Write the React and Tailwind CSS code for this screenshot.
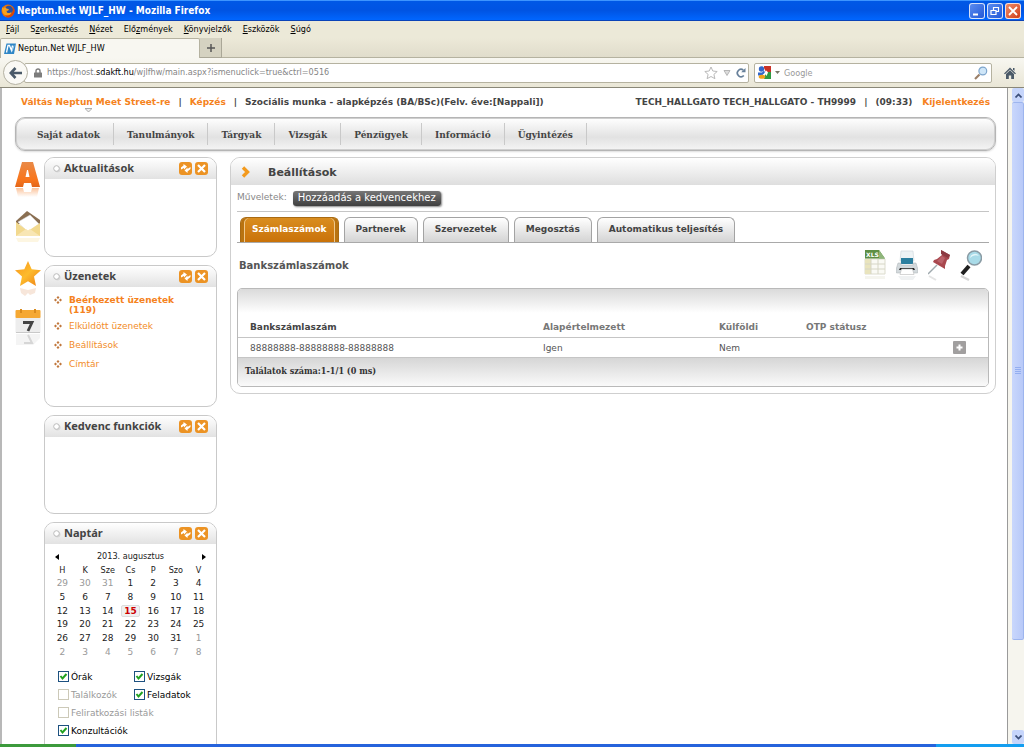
import { Fragment } from 'react';
import clsx from 'clsx';

const browserMenu = ['Fájl', 'Szerkesztés', 'Nézet', 'Előzmények', 'Könyvjelzők', 'Eszközök', 'Súgó'];
// index of the underlined access key in each menu entry
const accessKeys = [0, 1, 0, 3, 0, 0, 0];

const siteMenu = ['Saját adatok', 'Tanulmányok', 'Tárgyak', 'Vizsgák', 'Pénzügyek', 'Információ', 'Ügyintézés'];

const tabs = ['Számlaszámok', 'Partnerek', 'Szervezetek', 'Megosztás', 'Automatikus teljesítés'];

const messages = [
  { label: 'Beérkezett üzenetek (119)', bold: true },
  { label: 'Elküldött üzenetek' },
  { label: 'Beállítások' },
  { label: 'Címtár' },
];

const weekDays = ['H', 'K', 'Sze', 'Cs', 'P', 'Szo', 'V'];

const weeks = [
  [29, 30, 31, 1, 2, 3, 4],
  [5, 6, 7, 8, 9, 10, 11],
  [12, 13, 14, 15, 16, 17, 18],
  [19, 20, 21, 22, 23, 24, 25],
  [26, 27, 28, 29, 30, 31, 1],
  [2, 3, 4, 5, 6, 7, 8],
];

const isOtherMonth = (week, day) => (week === 0 && day > 7) || (week > 3 && day < 9);

/* ---------- Browser icons ---------- */

const FirefoxIcon = () => (
  <svg className="w-[14px] h-[14px]" viewBox="0 0 14 14">
    <circle cx="7" cy="7" r="6.5" fill="#e8710a" />
    <circle cx="7.8" cy="6" r="4.2" fill="#2b4f9e" />
    <path d="M1 3l1.500 1.500L4 3l1.500 1.500 2.500.8-1 1.500H5.500L6 8.500c1.500 1 3.500.5 4.500-.8-.3 3-2.500 4.300-5 3.800C2.500 11 .8 8.500 1 3z" fill="#f7a11b" />
    <path d="M7 13.500c4 0 6.500-3 6.500-6.500 0-2-.7-3.500-2-4.500.8 2 .8 4.500-.6 6.500C9.500 11 7 11.800 4 11.500c1 1.300 2 2 3 2z" fill="#d6450b" />
  </svg>
);

const NeptunIcon = () => (
  <svg className="w-[12px] h-[12px]" viewBox="0 0 12 12">
    <path d="M2.500.5H12L10 11H0z" fill="#2f86c6" />
    <path d="M2.500 9.500L4 2.500h1.500l2 5 1-5" fill="none" stroke="#fff" strokeWidth="1.300" />
    <path d="M8 8.500l2-6" stroke="#a7d0ee" />
  </svg>
);

const LockIcon = () => (
  <svg className="w-[8px] h-[10px]" viewBox="0 0 8 10">
    <path d="M2 5V3a2 2 0 0 1 4 0v2" fill="none" stroke="#7d7d7d" strokeWidth="1.400" />
    <rect y="4.500" width="8" height="5" rx=".5" fill="#7d7d7d" />
  </svg>
);

const BackIcon = () => (
  <svg className="w-[14px] h-[12px]" viewBox="0 0 14 12">
    <path d="M6.500 1L1.800 6l4.700 5M2 6h11" fill="none" stroke="#4a5968" strokeWidth="2.600" />
  </svg>
);

const StarOutline = () => (
  <svg className="w-[14px] h-[14px]" viewBox="0 0 14 14">
    <path d="M7 1l1.800 4 4.400.5-3.300 2.900 1 4.300L7 10.500l-3.900 2.200 1-4.300L.8 5.500 5.200 5z" fill="#fff" stroke="#b9b9b9" />
  </svg>
);

const ReloadIcon = () => (
  <svg className="w-[10px] h-[10px]" viewBox="0 0 10 10">
    <path d="M7.800 7.500A3.700 3.700 0 1 1 7.300 2" fill="none" stroke="#67809a" strokeWidth="1.700" />
    <path d="M9.500 0v4.300H5.200z" fill="#67809a" />
  </svg>
);

const GoogleIcon = () => (
  <svg className="w-[13px] h-[13px]" viewBox="0 0 13 13">
    <path d="M5 0h8v6H8z" fill="#c93226" />
    <path d="M8 6h5v7H6z" fill="#2f9a41" />
    <path d="M0 0h6v6L3 8 0 6z" fill="#fff" />
    <ellipse cx="3.500" cy="3" rx="2.700" ry="2.700" fill="#3367c9" />
    <path d="M0 6.500h4l2-2 1 2-3 3H0z" fill="#3367c9" />
    <ellipse cx="4" cy="10.800" rx="3.300" ry="2" fill="#f0a21b" />
    <path d="M8.500 4.500l1.500 2-1.500 3.500-2-3z" fill="#fff" />
  </svg>
);

const SearchIcon = () => (
  <svg className="w-[14px] h-[14px]" viewBox="0 0 14 14">
    <path d="M5.500 8.500L1 13" stroke="#9a7f68" strokeWidth="2.200" />
    <circle cx="8.800" cy="5" r="3.900" fill="#cfe6f8" stroke="#7fa6cc" strokeWidth="1.200" />
  </svg>
);

const HomeIcon = () => (
  <svg className="w-[12px] h-[12px]" viewBox="0 0 12 12">
    <path d="M0 6.500L6 .5l6 6-1 .8L6 2.500l-5 4.800z" fill="#4b5a69" />
    <path d="M2 7l4-3.800L10 7v5H7.200V8.500H4.800V12H2z" fill="#4b5a69" />
    <path d="M9 1h1.500v3L9 2.500z" fill="#4b5a69" />
  </svg>
);

const WindowButton = ({ label, close, children }) => (
  <button
    aria-label={label}
    className={clsx(
      'w-4 h-4 rounded-[3px] border border-white/80 flex items-center justify-center bg-gradient-to-br',
      close ? 'from-[#ee8a66] to-[#cf3a12]' : 'from-[#5b8cf0] to-[#2357d6]'
    )}
  >
    <svg className="w-[14px] h-[14px]" viewBox="0 0 14 14" fill="none" stroke="#fff">
      {children}
    </svg>
  </button>
);

/* ---------- Side icons ---------- */

const LetterAIcon = () => (
  <svg className="w-[26px] h-[40px]" viewBox="0 0 26 40">
    <defs>
      <linearGradient id="aFill" x1="0" y1="0" x2="0" y2="1">
        <stop offset="0" stopColor="#e98a48" />
        <stop offset=".7" stopColor="#f9761c" />
        <stop offset="1" stopColor="#e2661a" />
      </linearGradient>
      <linearGradient id="aGlow" x1="0" y1="0" x2="0" y2="1">
        <stop offset="0" stopColor="#fbc39b" />
        <stop offset="1" stopColor="#fff" />
      </linearGradient>
    </defs>
    <path d="M7 1h11l7 25h-8l-1-4H9l-1 4H0zM10.500 16h4l-1.500-7h-1z" fill="url(#aFill)" fillRule="evenodd" />
    <path d="M1 27h7l1 4h7l1-4h7l-2 9H3z" fill="url(#aGlow)" />
  </svg>
);

const EnvelopeIcon = () => (
  <svg className="w-[26px] h-[34px]" viewBox="0 0 26 34">
    <path d="M1 10L12 0l13 9v4H1z" fill="#8a6f52" />
    <path d="M3 11L15 4l9 9-11 8z" fill="#fff" stroke="#ddd" strokeWidth=".5" />
    <path d="M1 11l12 9 12-8v13H1z" fill="#f2d98f" />
    <path d="M1 25l10-7 2 1.500 2-1.500 10 7z" fill="#f8e6b4" />
    <path d="M1 27h24l-2 4H3z" fill="#fdf6e2" />
  </svg>
);

const StarIcon = () => (
  <svg className="w-[26px] h-[38px]" viewBox="0 0 26 38">
    <defs>
      <linearGradient id="starFill" x1="0" y1="0" x2="1" y2="1">
        <stop offset="0" stopColor="#f7931e" />
        <stop offset=".5" stopColor="#fdbb2c" />
        <stop offset="1" stopColor="#ee7f14" />
      </linearGradient>
    </defs>
    <path d="M13 0l3.700 8.300 9.300 1-7 6.200 2 9.500-8-4.800L5 25l2-9.500L0 9.300l9.300-1z" fill="url(#starFill)" />
    <path d="M5 27l8 2 8-2-1 5-5 2-2-2-3 3-4-3z" fill="#f7e6da" />
  </svg>
);

const CalendarIcon = () => (
  <svg className="w-[26px] h-[38px]" viewBox="0 0 26 38">
    <rect x=".5" y="7" width="25" height="17" rx="1" fill="#ededed" />
    <path d="M1 23.500h24" stroke="#c9c9c9" />
    <rect x=".5" y="1" width="25" height="8" rx="1" fill="#f5a833" />
    <path d="M6 0v4M20 0v4" stroke="#d98a1c" strokeWidth="2" />
    <path d="M8 13.500h9l-4 8.500" fill="none" stroke="#444" strokeWidth="2.800" />
    <path d="M1 25h24v4l-7 7H1z" fill="#f4f4f4" />
    <path d="M13 26l4 8H9" fill="none" stroke="#d6d6d6" strokeWidth="2" />
  </svg>
);

/* ---------- Toolbar icons ---------- */

const XlsIcon = () => (
  <svg className="w-[22px] h-[32px]" viewBox="0 0 22 32">
    <path d="M1 9h20v15H1z" fill="#fafaf5" stroke="#dcdccd" />
    <path d="M1 9h6v15H1z" fill="#e9e4bd" />
    <path d="M1 14h20M1 19h20M7 9v15M14 9v15" stroke="#d6d6c6" />
    <path d="M1 0h14l6 8.500H1z" fill="#5e8f45" />
    <path d="M15 0l6 8.500h-6z" fill="#8fb57b" />
    <text x="2" y="7" fontSize="6" fontWeight="bold" fill="#fff" fontFamily="DejaVu Sans, sans-serif">XLS</text>
    <path d="M1 26h20v3H1z" fill="#f5f5ef" />
  </svg>
);

const PrinterIcon = () => (
  <svg className="w-[22px] h-[32px]" viewBox="0 0 22 32">
    <path d="M5 1h12l1 10H4z" fill="#eef3f5" stroke="#cdd5d8" strokeWidth=".6" />
    <path d="M5 8h12v6H5z" fill="#2c7f9f" />
    <path d="M2 13h3v2h12v-2h3l1.500 5v5h-21v-5z" fill="#d3d9dc" stroke="#a9b0b4" strokeWidth=".5" />
    <path d="M4 18h14l1 2H3z" fill="#222" />
    <path d="M5.500 19h11l1.500 5.500H4z" fill="#fff" stroke="#bbb" strokeWidth=".6" />
    <path d="M2 26h18l-3 4H5z" fill="#eff1f2" />
  </svg>
);

const PinIcon = () => (
  <svg className="w-[22px] h-[32px]" viewBox="0 0 22 32">
    <path d="M9 15L0 24" stroke="#9fa9ae" strokeWidth="1.500" />
    <path d="M13 0l9 5-1 4-2 1-2 6v3L5 12l1-2 3-1 5-4z" fill="#a9484f" />
    <path d="M13 0l9 5-2 3-7-4z" fill="#8c3a42" />
    <path d="M14 6l3 2-3 6-5-3z" fill="#bb626a" />
    <path d="M1 26l7 4" stroke="#e4e4e4" strokeWidth="2" />
  </svg>
);

const MagnifierIcon = () => (
  <svg className="w-[22px] h-[32px]" viewBox="0 0 22 32">
    <path d="M9 16l-7 8" stroke="#1f1f1f" strokeWidth="4" />
    <circle cx="14.500" cy="8" r="7" fill="#a9dbe8" stroke="#8a9ba4" strokeWidth="1.500" />
    <path d="M10 8a5 5 0 0 1 9-2 8 8 0 0 0-9 2z" fill="#e4f6fa" />
    <path d="M1 26l8 4" stroke="#d5d5d5" strokeWidth="2.500" />
  </svg>
);

const RefreshButton = () => (
  <button aria-label="Frissítés" className="w-[13px] h-[13px] rounded-[3px] bg-[#ec9324]">
    <svg className="w-[13px] h-[13px]" viewBox="0 0 13 13">
      <path d="M2 7.500V5.500L4.500 3.500V2L8 4.500 5 7.500V6z" fill="#fff" />
      <path d="M11.500 5v2L8.500 9.500V11L5.500 8.500l3-3V7z" fill="#fff" />
    </svg>
  </button>
);

const CloseButton = () => (
  <button aria-label="Bezárás" className="w-[13px] h-[13px] rounded-[3px] bg-[#ec9324]">
    <svg className="w-[13px] h-[13px]" viewBox="0 0 13 13">
      <path d="M3 3l7 7M10 3l-7 7" stroke="#fff" strokeWidth="2.200" />
    </svg>
  </button>
);

/* ---------- Sections ---------- */

const BrowserHeader = () => (
  <header className="shrink-0 font-['DejaVu_Sans_Condensed','DejaVu_Sans',sans-serif] text-[9px]">
    {/* Title bar */}
    <div className="h-[21px] flex items-center gap-[2px] pl-px pr-[3px] border-t border-[#3d95ff] border-b border-b-[#0a43b8] bg-gradient-to-b from-[#0058e6] via-[#0054e3] to-[#0066ff]">
      <FirefoxIcon />
      <h1 className="flex-1 text-[10px] font-bold text-white">Neptun.Net WJLF_HW - Mozilla Firefox</h1>
      <div className="flex gap-[2px]">
        <WindowButton label="Kis méret">
          <path d="M3 10.500h5" strokeWidth="2" />
        </WindowButton>
        <WindowButton label="Előző méret">
          <path d="M3 6.500h5v4H3zM5.500 6V3.500h5v4H8.500" strokeWidth="1.200" />
        </WindowButton>
        <WindowButton label="Bezárás" close>
          <path d="M3 3l8 8M11 3l-8 8" strokeWidth="1.800" />
        </WindowButton>
      </div>
    </div>

    {/* Menu bar */}
    <nav className="h-[17px] flex items-center gap-[11px] pl-[6px] bg-[#ece9d8] text-black">
      {browserMenu.map((item, i) => (
        <button key={item}>
          {item.slice(0, accessKeys[i])}
          <u>{item[accessKeys[i]]}</u>
          {item.slice(accessKeys[i] + 1)}
        </button>
      ))}
    </nav>

    {/* Tab strip */}
    <div className="h-[20px] flex bg-gradient-to-b from-[#ece9d8] to-[#e0dccb]">
      <div className="w-[200px] flex items-center gap-[2px] pl-[3px] border border-b-0 border-[#b5b2a0] rounded-t-[2px] bg-[#f8f7f1] text-black">
        <NeptunIcon />
        Neptun.Net WJLF_HW
      </div>
      <button aria-label="Új lap" className="w-[22px] flex items-center justify-center border-r border-b border-[#aaa797] bg-[#d5d2c1]">
        <svg className="w-2 h-2" viewBox="0 0 8 8">
          <path d="M4 0v8M0 4h8" stroke="#555" strokeWidth="1.500" />
        </svg>
      </button>
      <div className="flex-1 border-b border-[#b5b2a0]" />
    </div>

    {/* Navigation bar */}
    <div className="h-[30px] flex items-center pl-[3px] pr-2 bg-gradient-to-b from-[#f8f7f1] to-[#e9e6d6] border-b border-[#8a8778]">
      <button aria-label="Vissza" className="z-10 w-[25px] h-[25px] rounded-full border border-[#b4b1a2] bg-[#faf9f5] flex items-center justify-center">
        <BackIcon />
      </button>
      <div className="flex-1 -ml-1 h-5 flex items-center gap-[5px] pl-[9px] pr-[2px] border border-[#b5b2a0] bg-white rounded-[2px] text-[#858585]">
        <LockIcon />
        <p className="flex-1">
          https://host.<span className="text-black">sdakft.hu</span>/wjlfhw/main.aspx?ismenuclick=true&amp;ctrl=0516
        </p>
        <StarOutline />
        <svg className="w-2 h-[6px]" viewBox="0 0 8 6">
          <path d="M1 .5h6l-3 5z" fill="#ddd" stroke="#b5b5b5" />
        </svg>
        <button aria-label="Újratöltés">
          <ReloadIcon />
        </button>
      </div>
      <div className="ml-[5px] w-[238px] h-5 flex items-center gap-[4px] px-[3px] border border-[#b5b2a0] bg-white rounded-[2px]">
        <GoogleIcon />
        <svg className="w-[5px] h-[3px]" viewBox="0 0 5 3">
          <path d="M0 0h5L2.500 3z" fill="#776" />
        </svg>
        <input aria-label="Keresés" placeholder="Google" className="flex-1 min-w-0 h-4 outline-none placeholder:text-[#999]" />
        <button aria-label="Keresés indítása">
          <SearchIcon />
        </button>
      </div>
      <button aria-label="Kezdőlap" className="ml-3">
        <HomeIcon />
      </button>
    </div>
  </header>
);

const Scrollbar = () => (
  <div className="w-4 shrink-0 flex flex-col pl-1 bg-[#f6f5ee]">
    <div className="h-[14px] rounded-[2px] bg-[#c6d5fb] flex items-center justify-center">
      <svg className="w-[7px] h-[5px]" viewBox="0 0 7 5">
        <path d="M.5 4.500l3-3 3 3" fill="none" stroke="#3c4f7a" strokeWidth="1.700" />
      </svg>
    </div>
    <div className="h-[82%] rounded-[2px] border-r border-y border-[#9db5ee] bg-gradient-to-r from-[#c9d7fc] to-[#b8c9f8] flex items-center justify-center">
      <svg className="w-[6px] h-[8px]" viewBox="0 0 6 8">
        <path d="M0 .5h6M0 2.500h6M0 4.500h6M0 6.500h6" stroke="#93aef0" />
      </svg>
    </div>
    <div className="flex-1" />
    <div className="h-[14px] rounded-[2px] bg-[#c6d5fb] flex items-center justify-center">
      <svg className="w-[7px] h-[5px]" viewBox="0 0 7 5">
        <path d="M.5.5l3 3 3-3" fill="none" stroke="#3c4f7a" strokeWidth="1.700" />
      </svg>
    </div>
  </div>
);

const SidePanel = ({ title, className, children }) => (
  <section className={clsx('w-[173px] rounded-[10px] border border-[#c9c9c9] bg-white overflow-hidden', className)}>
    <div className="h-[21px] flex items-center gap-[3px] pl-2 pr-2 bg-gradient-to-b from-white to-[#e2e2e2]">
      <svg className="w-2 h-2" viewBox="0 0 8 8">
        <circle cx="4.500" cy="4.500" r="3" fill="#d9d9d9" />
        <circle cx="3.500" cy="3.500" r="2.800" fill="#fff" stroke="#bbb" />
      </svg>
      <h2 className="flex-1 font-['Noto_Sans',sans-serif] text-[11px] font-bold text-[#444]">{title}</h2>
      <RefreshButton />
      <CloseButton />
    </div>
    {children}
  </section>
);

const Check = ({ label, checked, disabled }) => (
  <label className={clsx('h-[18px] flex items-center gap-[2px] text-[9px] whitespace-nowrap', disabled ? 'text-[#999]' : 'text-black')}>
    <span className="grid w-[11px] h-[11px]">
      <input
        type="checkbox"
        defaultChecked={checked}
        disabled={disabled}
        className={clsx(
          'peer appearance-none col-start-1 row-start-1 w-[11px] h-[11px] border bg-white',
          disabled ? 'border-[#ccc9b8]' : 'border-[#1d5180]'
        )}
      />
      <svg className="hidden peer-checked:block col-start-1 row-start-1 w-[11px] h-[11px] pointer-events-none" viewBox="0 0 11 11">
        <path d="M2.500 5l2 2.500 4-4.500" fill="none" stroke="#21a121" strokeWidth="2" />
      </svg>
    </span>
    <span className="pt-1">{label}</span>
  </label>
);

const Calendar = () => (
  <div className="px-[6px] pt-[6px] text-[#222]">
    <div className="h-[14px] flex items-center justify-between px-1 font-['DejaVu_Sans_Condensed','DejaVu_Sans',sans-serif] text-[9px]">
      <button aria-label="Előző hónap">
        <svg className="w-1 h-[6px]" viewBox="0 0 4 6">
          <path d="M4 0v6L0 3z" />
        </svg>
      </button>
      2013. augusztus
      <button aria-label="Következő hónap">
        <svg className="w-1 h-[6px]" viewBox="0 0 4 6">
          <path d="M0 0v6l4-3z" />
        </svg>
      </button>
    </div>
    <table className="w-full h-[95px] table-fixed text-center text-[9px] leading-[12px]">
      <thead>
        <tr className="font-['DejaVu_Sans_Condensed','DejaVu_Sans',sans-serif]">
          {weekDays.map((day) => (
            <th key={day} className="p-0 font-normal">{day}</th>
          ))}
        </tr>
      </thead>
      <tbody>
        {weeks.map((week, w) => (
          <tr key={w}>
            {week.map((day) => (
              <td
                key={day}
                className={clsx('p-0', isOtherMonth(w, day) && 'text-[#999]')}
              >
                {w === 2 && day === 15 ? (
                  <span className="block h-3 mx-[2px] rounded-[2px] border border-[#ddd] bg-[#f0f0f0] font-bold leading-[11px] text-[#c00]">15</span>
                ) : (
                  day
                )}
              </td>
            ))}
          </tr>
        ))}
      </tbody>
    </table>
    <div className="mt-[8px] pl-[7px] grid grid-cols-[76px_1fr]">
      <Check label="Órák" checked />
      <Check label="Vizsgák" checked />
      <Check label="Találkozók" disabled />
      <Check label="Feladatok" checked />
      <div className="col-span-2">
        <Check label="Feliratkozási listák" disabled />
        <Check label="Konzultációk" checked />
      </div>
    </div>
  </div>
);

const Sidebar = () => (
  <aside className="flex gap-[3px]">
    <nav className="w-[26px] flex flex-col items-center gap-[10px] pt-1">
      <a href="#aktualitasok" aria-label="Aktualitások"><LetterAIcon /></a>
      <a href="#uzenetek" aria-label="Üzenetek"><EnvelopeIcon /></a>
      <a href="#kedvencek" aria-label="Kedvenc funkciók" className="pt-[6px]"><StarIcon /></a>
      <a href="#naptar" aria-label="Naptár"><CalendarIcon /></a>
    </nav>
    <div className="flex flex-col gap-2">
      <SidePanel title="Aktualitások" className="h-[100px]" />
      <SidePanel title="Üzenetek" className="h-[142px]">
        <ul className="pl-[9px] pr-6 pt-2 text-[9px] leading-[10px]">
          {messages.map(({ label, bold }) => (
            <li key={label} className="flex items-start gap-[7px] mb-[9px] first:mb-[6px]">
              <svg className="w-2 h-2 mt-px shrink-0" viewBox="0 0 8 8">
                <path d="M4 0l1.500 1.500L4 3 2.500 1.500zM4 5l1.500 1.500L4 8 2.500 6.500zM1.500 2.500L3 4 1.500 5.500 0 4zM6.500 2.500L8 4 6.500 5.500 5 4z" fill="#c0763a" />
              </svg>
              <a href="#uzenetek" className={bold ? 'font-bold text-[#f58220]' : 'text-[#f28c28]'}>{label}</a>
            </li>
          ))}
        </ul>
      </SidePanel>
      <SidePanel title="Kedvenc funkciók" className="h-[99px]" />
      <SidePanel title="Naptár" className="h-[260px]">
        <Calendar />
      </SidePanel>
    </div>
  </aside>
);

const AccountsTable = () => (
  <div className="rounded-[5px] border border-[#b9b9b9] overflow-hidden">
    <table className="w-full table-fixed text-left text-[9px] text-[#555]">
      <thead>
        <tr className="h-12 align-bottom bg-gradient-to-b from-[#dadada] via-white to-white text-[#777]">
          <th className="w-[305px] p-0 pl-3 pb-1 leading-[12px] text-[#444]">Bankszámlaszám</th>
          <th className="w-[176px] p-0 pb-1 leading-[12px]">Alapértelmezett</th>
          <th className="w-[87px] p-0 pb-1 leading-[12px]">Külföldi</th>
          <th className="p-0 pb-1 leading-[12px]">OTP státusz</th>
          <th className="w-[35px] p-0" />
        </tr>
      </thead>
      <tbody>
        <tr className="h-5 border-y border-[#c5c5c5] leading-[12px]">
          <td className="p-0 pl-3 pt-[2px]">88888888-88888888-88888888</td>
          <td className="p-0 pt-[2px]">Igen</td>
          <td className="p-0 pt-[2px]">Nem</td>
          <td className="p-0" />
          <td className="p-0">
            <button aria-label="Lehetőségek" className="block w-[13px] h-[13px] rounded-[1px] bg-[#a19f9f]">
              <svg className="w-[13px] h-[13px]" viewBox="0 0 13 13">
                <path d="M6.500 3.500v6M3.500 6.500h6" stroke="#fff" strokeWidth="2" />
              </svg>
            </button>
          </td>
        </tr>
      </tbody>
    </table>
    <div className="h-[28px] flex items-center pl-[7px] bg-gradient-to-b from-[#d6d6d6] to-[#fafafa] font-['DejaVu_Serif_Condensed','DejaVu_Serif',serif] text-[9px] font-bold text-[#333]">
      Találatok száma:1-1/1 (0 ms)
    </div>
  </div>
);

const MainPanel = () => (
  <main className="flex-1 self-start rounded-[10px] border border-[#cfcfcf] bg-white overflow-hidden">
    <div className="h-[27px] flex items-center pl-[10px] bg-gradient-to-b from-white to-[#dedede]">
      <svg className="w-[10px] h-[12px]" viewBox="0 0 10 12">
        <path d="M2 1.500L6.500 6 2 10.500" fill="none" stroke="#f39a1d" strokeWidth="3.400" />
      </svg>
      <h2 className="ml-[17px] pt-1 text-[11px] font-bold text-[#444]">Beállítások</h2>
    </div>

    <div className="px-[6px] pb-[6px]">
      <div className="h-[27px] flex items-center gap-[6px] border-b border-[#c5c5c5]">
        <span className="text-[9px] text-[#888]">Műveletek:</span>
        <button className="h-[15px] px-[5px] rounded-[3px] bg-gradient-to-b from-[#777] to-[#3f3f3f] shadow-[1px_1px_2px_#888] text-[10px] leading-[14px] text-white">
          Hozzáadás a kedvencekhez
        </button>
      </div>

      <div role="tablist" className="flex gap-[5px] pl-[3px] mt-[5px] border-b border-[#a9a9a9]">
        {tabs.map((tab, i) => (
          <button
            key={tab}
            role="tab"
            aria-selected={i === 0}
            className={clsx(
              'h-[25px] px-[11px] rounded-t-[6px] border border-b-0 text-[9px] font-bold bg-gradient-to-b',
              i === 0
                ? 'border-[#a96a12] from-[#d98d1f] to-[#c97208] text-white shadow-[inset_3px_0_0_#b97310,inset_-3px_0_0_#b97310,inset_4px_0_0_#efc88c,inset_-4px_0_0_#efc88c]'
                : 'border-[#a3a3a3] from-white to-[#d4d4d4] text-[#444]'
            )}
          >
            {tab}
          </button>
        ))}
      </div>

      <div className="h-[45px] flex items-center justify-between pl-[2px] pr-[7px]">
        <h3 className="text-[10px] font-bold text-[#555]">Bankszámlaszámok</h3>
        <div className="flex gap-[10px]">
          <button aria-label="Excel export"><XlsIcon /></button>
          <button aria-label="Nyomtatás"><PrinterIcon /></button>
          <button aria-label="Rögzítés"><PinIcon /></button>
          <button aria-label="Keresés"><MagnifierIcon /></button>
        </div>
      </div>

      <AccountsTable />
    </div>
  </main>
);

const App = () => (
  <div className="h-screen flex flex-col overflow-hidden bg-white font-['DejaVu_Sans',sans-serif]">
    <BrowserHeader />

    <div className="flex-1 min-h-0 flex">
      <div className="flex-1 min-w-0 overflow-hidden border-l-2 border-[#b8b8b8] border-r border-r-[#9a9a9a] pl-[13px] pr-[11px]">
        {/* Account line */}
        <div className="h-[29px] flex items-start justify-between px-[6px] pt-2 text-[9px] leading-[12px] font-bold text-[#444]">
          <div className="flex gap-2">
            <div>
              <a href="#street" className="block text-[#f58220]">Váltás Neptun Meet Street-re</a>
              <svg className="w-[7px] h-[4px] ml-16" viewBox="0 0 7 4">
                <path d="M0 .5h7L3.500 4z" fill="#eee" stroke="#999" strokeWidth=".8" />
              </svg>
            </div>
            <span>|</span>
            <a href="#kepzes" className="text-[#f58220]">Képzés</a>
            <span>|</span>
            <span>Szociális munka - alapképzés (BA/BSc)(Felv. éve:[Nappali])</span>
          </div>
          <div className="flex gap-2">
            <span>TECH_HALLGATO TECH_HALLGATO - TH9999</span>
            <span>|</span>
            <span>(09:33)</span>
            <a href="#kijelentkezes" className="ml-[2px] text-[#f58220]">Kijelentkezés</a>
          </div>
        </div>

        {/* Site menu */}
        <nav className="h-[34px] flex items-center pl-2 rounded-[10px] border border-[#b5b5b5] shadow-[inset_0_0_0_1px_#cfcfcf,0_1px_2px_#ddd] bg-linear-to-b from-white via-[#e2e2e2] via-60% to-[#f5f5f5]">
          {siteMenu.map((item) => (
            <Fragment key={item}>
              <a href="#menu" className="px-[13px] font-['DejaVu_Serif_Condensed','DejaVu_Serif',serif] text-[10px] font-bold text-[#444]">{item}</a>
              <span className="w-px h-[22px] bg-[#c9c9c9]" />
            </Fragment>
          ))}
        </nav>

        <div className="flex gap-[13px] pt-[6px]">
          <Sidebar />
          <MainPanel />
        </div>
      </div>
      <Scrollbar />
    </div>

    {/* Edge of the taskbar */}
    <footer className="shrink-0 h-[3px] flex">
      <div className="w-[76px] bg-[#3c9a3c]" />
      <div className="flex-1 bg-[#2663dc]" />
      <div className="w-[88px] bg-[#139ef0]" />
    </footer>
  </div>
);

export default App;
